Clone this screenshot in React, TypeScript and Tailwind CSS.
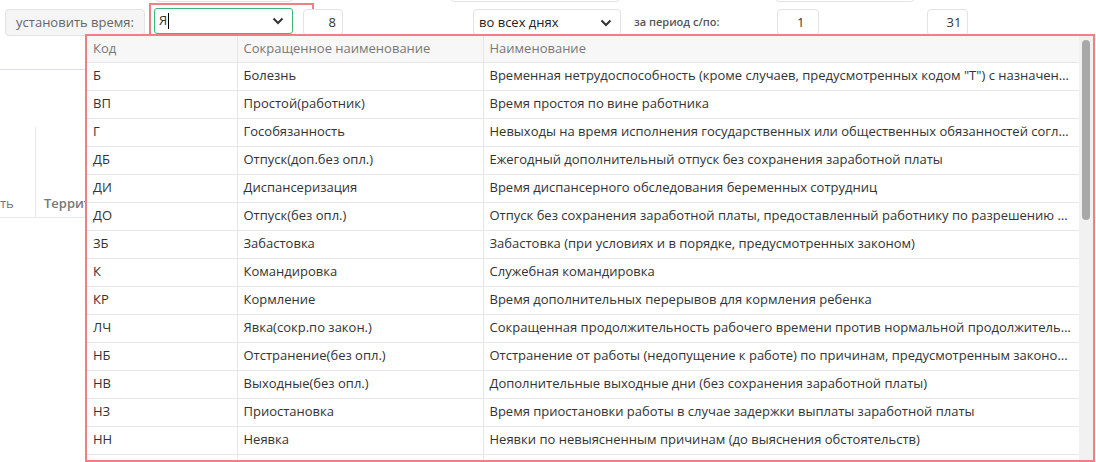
import React from "react";

const rows: [string, string, string][] = [
  ["Б", "Болезнь", "Временная нетрудоспособность (кроме случаев, предусмотренных кодом \"Т\") с назначением пособия по государственному социальному страхованию"],
  ["ВП", "Простой(работник)", "Время простоя по вине работника"],
  ["Г", "Гособязанность", "Невыходы на время исполнения государственных или общественных обязанностей согласно законодательству"],
  ["ДБ", "Отпуск(доп.без опл.)", "Ежегодный дополнительный отпуск без сохранения заработной платы"],
  ["ДИ", "Диспансеризация", "Время диспансерного обследования беременных сотрудниц"],
  ["ДО", "Отпуск(без опл.)", "Отпуск без сохранения заработной платы, предоставленный работнику по разрешению работодателя"],
  ["ЗБ", "Забастовка", "Забастовка (при условиях и в порядке, предусмотренных законом)"],
  ["К", "Командировка", "Служебная командировка"],
  ["КР", "Кормление", "Время дополнительных перерывов для кормления ребенка"],
  ["ЛЧ", "Явка(сокр.по закон.)", "Сокращенная продолжительность рабочего времени против нормальной продолжительности рабочего дня"],
  ["НБ", "Отстранение(без опл.)", "Отстранение от работы (недопущение к работе) по причинам, предусмотренным законодательством"],
  ["НВ", "Выходные(без опл.)", "Дополнительные выходные дни (без сохранения заработной платы)"],
  ["НЗ", "Приостановка", "Время приостановки работы в случае задержки выплаты заработной платы"],
  ["НН", "Неявка", "Неявки по невыясненным причинам (до выяснения обстоятельств)"],
  ["ОЖ", "Отпуск по уходу", "Отпуск по уходу за ребенком"],
];

function Chevron() {
  return (
    <svg width="12" height="8" viewBox="0 0 12 8">
      <path d="M1.5 1.5 L6 6 L10.5 1.5" stroke="#333" strokeWidth="2" fill="none" />
    </svg>
  );
}

export default function App() {
  return (
    <div className="relative w-[1096px] h-[462px] overflow-hidden bg-white text-[13px] text-[#333]" style={{ fontFamily: '"Open Sans", sans-serif' }}>
      <div className="absolute left-[155px] top-[-20px] w-[138px] h-[22px] border border-[#e3e3e3] rounded" />
      <div className="absolute left-[450px] top-[-20px] w-[170px] h-[22px] border border-[#e3e3e3] rounded" />
      <div className="absolute left-[775px] top-[-20px] w-[140px] h-[22px] border border-[#e3e3e3] rounded" />

      {/* toolbar */}
      <div className="flex items-end h-[36px]">
        <div className="ml-[5px] w-[140px] h-[27px] rounded border border-[#e3e3e3] bg-[#f5f5f5] flex items-center justify-center text-[#666]">установить время:</div>
        <div className="ml-[4px] h-[33px] w-[165px] border-2 border-[#ef7f85] pl-[3px] pt-[3px]">
          <div className="h-[26px] w-[139px] border border-[#3cb878] rounded-[3px] flex items-center justify-between pl-[4px] pr-[8px]">
            <span className="flex items-center">Я<span className="inline-block w-px h-[16px] bg-black ml-px" /></span>
            <Chevron />
          </div>
        </div>
        <div className="ml-[-11px] w-[40px] h-[27px] border border-[#e3e3e3] rounded flex items-center justify-end pr-[6px] bg-white">8</div>
        <div className="ml-[130px] w-[148px] h-[27px] border border-[#e3e3e3] rounded flex items-center justify-between px-[5px] pr-[8px] text-[#222]">
          <span>во всех днях</span>
          <Chevron />
        </div>
        <div className="ml-[13px] h-[27px] flex items-center text-[11px] font-semibold text-[#555]">за период с/по:</div>
        <div className="ml-[58px] w-[42px] h-[27px] border border-[#e3e3e3] rounded flex items-center justify-end pr-[14px]">1</div>
        <div className="ml-[108px] w-[41px] h-[27px] border border-[#e3e3e3] rounded flex items-center justify-end pr-[6px]">31</div>
      </div>

      {/* background content */}
      <div className="mt-[33px] w-[90px] border-t border-[#dcdcec]" />
      <div className="mt-[57px] flex h-[91px] border-b border-[#e8e8e8] text-[#777]">
        <div className="w-[36px] border-r border-[#e8e8e8] flex items-end pb-[4px]">ть</div>
        <div className="pl-[8px] flex items-end pb-[4px] font-semibold">Террит</div>
      </div>

      {/* dropdown */}
      <div className="absolute left-[85px] top-[34px] w-[1010px] h-[428px] border-2 border-[#ef7f85] bg-white flex">
        <div className="flex-1 overflow-hidden">
          <table className="w-full table-fixed border-collapse">
            <colgroup>
              <col className="w-[150px]" />
              <col className="w-[246px]" />
              <col />
            </colgroup>
            <thead>
              <tr className="h-[26px] bg-[#f7f7f7] text-[#777] text-left">
                <th className="font-normal px-[6px] border-r border-b border-[#e6e6e6]">Код</th>
                <th className="font-normal px-[6px] border-r border-b border-[#e6e6e6]">Сокращенное наименование</th>
                <th className="font-normal px-[6px] border-b border-[#e6e6e6]">Наименование</th>
              </tr>
            </thead>
            <tbody>
              {rows.map((r) => (
                <tr key={r[0]} className="h-[28px]">
                  <td className="px-[6px] border-r border-b border-[#e6e6e6]">{r[0]}</td>
                  <td className="px-[6px] border-r border-b border-[#e6e6e6]">{r[1]}</td>
                  <td className="px-[6px] border-b border-[#e6e6e6] whitespace-nowrap overflow-hidden text-ellipsis">{r[2]}</td>
                </tr>
              ))}
            </tbody>
          </table>
        </div>
        <div className="w-[14px] bg-[#f1f1f1] flex justify-center pt-[4px]">
          <div className="w-[8px] h-[180px] rounded bg-[#a8a8a8]" />
        </div>
      </div>
    </div>
  );
}
